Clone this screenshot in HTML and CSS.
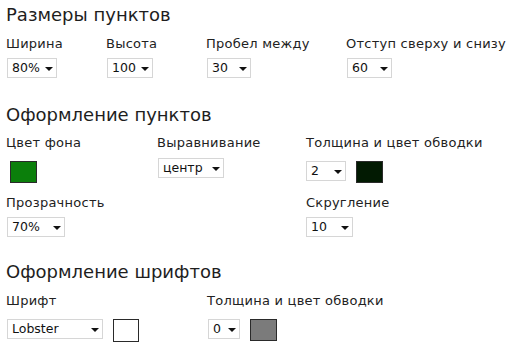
FILE: index.html
```html
<!DOCTYPE html>
<html lang="ru">
<head>
<meta charset="utf-8">
<title>Настройки</title>
<link rel="stylesheet" href="styles.css">
</head>
<body>
<section class="section s1">
  <h2 class="title">Размеры пунктов</h2>
  <div class="fields cols-1">
    <div class="field">
      <div class="label">Ширина</div>
      <div class="controls"><div class="select w50"><span>80%</span><i class="arrow"></i></div></div>
    </div>
    <div class="field">
      <div class="label">Высота</div>
      <div class="controls"><div class="select w46"><span>100</span><i class="arrow"></i></div></div>
    </div>
    <div class="field">
      <div class="label">Пробел между</div>
      <div class="controls"><div class="select w44"><span>30</span><i class="arrow"></i></div></div>
    </div>
    <div class="field">
      <div class="label">Отступ сверху и снизу</div>
      <div class="controls"><div class="select w45"><span>60</span><i class="arrow"></i></div></div>
    </div>
  </div>
</section>

<section class="section s2">
  <h2 class="title">Оформление пунктов</h2>
  <div class="fields cols-2">
    <div class="field">
      <div class="label">Цвет фона</div>
      <div class="controls c-swatch"><div class="swatch green"></div></div>
    </div>
    <div class="field">
      <div class="label">Выравнивание</div>
      <div class="controls c-align"><div class="select w66"><span>центр</span><i class="arrow"></i></div></div>
    </div>
    <div class="field">
      <div class="label">Толщина и цвет обводки</div>
      <div class="controls c-swatch"><div class="select w40"><span>2</span><i class="arrow"></i></div><div class="swatch dark"></div></div>
    </div>
    <div class="field row2">
      <div class="label">Прозрачность</div>
      <div class="controls"><div class="select w58"><span>70%</span><i class="arrow"></i></div></div>
    </div>
    <div class="field row2 empty"></div>
    <div class="field row2">
      <div class="label">Скругление</div>
      <div class="controls"><div class="select w47"><span>10</span><i class="arrow"></i></div></div>
    </div>
  </div>
</section>

<section class="section s3">
  <h2 class="title">Оформление шрифтов</h2>
  <div class="fields cols-3">
    <div class="field">
      <div class="label">Шрифт</div>
      <div class="controls c-font"><div class="select w96"><span>Lobster</span><i class="arrow"></i></div><div class="swatch white"></div></div>
    </div>
    <div class="field">
      <div class="label">Толщина и цвет обводки</div>
      <div class="controls c-font"><div class="select w32"><span>0</span><i class="arrow"></i></div><div class="swatch gray"></div></div>
    </div>
  </div>
</section>
</body>
</html>
```

FILE: styles.css
```css
html, body {
  margin: 0;
  padding: 0;
  background: #ffffff;
}

body {
  width: 516px;
  height: 349px;
  overflow: hidden;
  padding-left: 6px;
  box-sizing: border-box;
  font-family: "DejaVu Sans", Verdana, sans-serif;
  color: #222222;
}

.title {
  margin: 0;
  font-size: 18px;
  line-height: 22px;
  font-weight: normal;
  color: #1e1e1e;
}

.s1 .title { margin-top: 4px; }
.s2 .title { margin-top: 26px; }
.s3 .title { margin-top: 24px; }

.fields {
  display: grid;
  margin-top: 10px;
}

.s2 .fields { margin-top: 9px; }

.cols-1 { grid-template-columns: 100px 100px 140px 1fr; }
.cols-2 { grid-template-columns: 151px 149px 1fr; }
.cols-3 { grid-template-columns: 201px 1fr; }

.label {
  font-size: 13px;
  line-height: 16px;
  letter-spacing: 0.25px;
  color: #222222;
  white-space: nowrap;
}

.controls {
  display: flex;
  align-items: flex-start;
  gap: 10px;
  margin-top: 6px;
  margin-left: 1px;
}

.c-swatch { margin-top: 10px; margin-left: 0; }
.c-align { margin-top: 7px; margin-left: 1px; }
.c-font { margin-top: 10px; }

.row2 { margin-top: 12px; }
.row2 .controls { margin-left: 1px; }
.cols-2 .field:nth-child(3) .controls { margin-left: 0; }
.cols-2 .field:nth-child(6) .controls { margin-left: 0; }

.select {
  box-sizing: border-box;
  height: 20px;
  border: 1px solid #d6d6d6;
  background: #ffffff;
  display: flex;
  align-items: center;
  justify-content: space-between;
  padding: 0 3px 0 4px;
  font-size: 12.5px;
  line-height: 18px;
  color: #111111;
}

.arrow {
  display: block;
  width: 0;
  height: 0;
  border-left: 4px solid transparent;
  border-right: 4px solid transparent;
  border-top: 4px solid #111111;
  margin-top: 1px;
}

.w32 { width: 32px; }
.w40 { width: 40px; }
.w44 { width: 44px; }
.w45 { width: 45px; }
.w46 { width: 46px; }
.w47 { width: 47px; }
.w50 { width: 50px; }
.w58 { width: 58px; }
.w66 { width: 66px; }
.w96 { width: 96px; }

.swatch {
  box-sizing: border-box;
  width: 27px;
  height: 22px;
  border: 1px solid #2a2a2a;
}

.green { background: #0b7f0b; margin-left: 4px; }
.dark { background: #021a02; }
.white { background: #ffffff; width: 26px; height: 23px; }
.gray { background: #7b7b7b; }
```
